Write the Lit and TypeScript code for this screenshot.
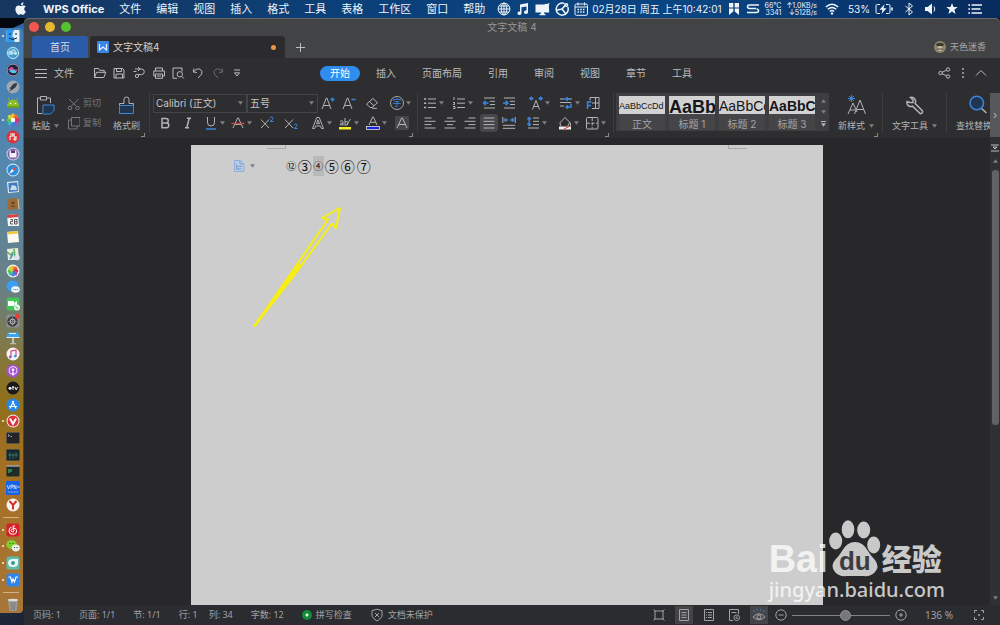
import { LitElement, html, svg, css, nothing } from "lit";
import { customElement, state } from "lit/decorators.js";

const ic = (w: number, h: number, body: unknown, cls = "") =>
  html`<svg class="ic ${cls}" width=${w} height=${h} viewBox="0 0 ${w} ${h}" aria-hidden="true">${body}</svg>`;

const caret = html`<svg class="caret" width="5" height="4" viewBox="0 0 5 4" aria-hidden="true"><path d="M0 .3h5L2.500 3.800z"/></svg>`;

/* ---------- system menu bar ---------- */
const apple = svg`<path class="f" d="M8.700 2.800C9.300 2.100 9.500 1.200 9.400.3c-.9.100-2.600.9-2.500 2.900.7 0 1.300-.1 1.800-.4zM11.800 9.400c-.7 1.800-1.700 3.300-2.900 3.300-.8 0-1.100-.5-2-.5s-1.300.5-2 .5C3.300 12.700 1.400 10 1.400 7.200c0-2.400 1.500-3.800 3.100-3.800 1 0 1.700.6 2.400.6s1.500-.7 2.700-.6c.9 0 1.700.5 2.100 1.200-2.100 1.300-1.800 4 .1 4.800z"/>`;
const globe = svg`<g class="s"><circle cx="7" cy="7" r="5.900"/><ellipse cx="7" cy="7" rx="2.800" ry="5.900"/><path d="M7 1v12M1 7h12M2.200 4h9.600M2.200 10h9.600"/></g>`;
const music = svg`<path class="f" d="M4 2.500L12 1v9.200a2 1.700 0 1 1-1.500-1.600V4.400L5.500 5.300v6a2 1.700 0 1 1-1.500-1.600z"/>`;
const display = svg`<path class="f" d="M.5 2.500h9l1-.8 1.300.3L14.500 1l-.6 2.500.3 7H9l.3 1.500h1.200v1.200h-6V12h1.200L6 10.500H.5z"/>`;
const orbit = svg`<g class="s b"><path d="M12.800 5A6 6 0 1 1 9.500 1.600"/><path d="M1.300 8.300L7 7l3.500-4M7 7l3.500 4.500"/><circle cx="11.300" cy="3" r="1.300"/></g>`;
const calendar = svg`<g class="s"><rect x="1" y="2" width="12.500" height="11.300" rx="1.500"/><path d="M1 5h12.500M4 0.500v3M10.500 0.500v3"/><path stroke-dasharray="1.500 1.200" d="M3.500 7.500h8M3.500 10h8" stroke-width="1.500"/></g>`;
const flag = svg`<path class="f" d="M1 1h4.300v8.500L1 13zM6.700 1H11v12L6.700 9.500z"/><path d="M1 6h10" stroke="#0b3b75" stroke-width="1"/>`;
const strip = svg`<path class="s b" d="M13 3H3.500Q1.500 3 1.500 4.700T3.500 6.500H10M1 10.500h9.500q2 0 2-1.700T10.500 7" stroke-width="2"/>`;
const wifi = svg`<g class="s b"><path d="M.8 5Q7 -.6 13.200 5M2.800 7.300Q7 3.600 11.200 7.300M4.800 9.500Q7 7.500 9.200 9.500"/></g><circle class="f" cx="7" cy="11.500" r="1.200"/>`;
const battery = svg`<g class="s"><path d="M5 2.500H2.300q-1.300 0-1.300 1.300v6.400q0 1.300 1.300 1.300H5M11 2.500h2.700q1.300 0 1.300 1.300v6.400q0 1.300-1.300 1.300H11"/><path d="M17 5.500v3" stroke-width="1.600"/></g><path class="f" d="M9.500 2.200L4.500 7.800h3L6.500 12l5-5.800h-3z"/>`;
const bluetooth = svg`<path class="s" d="M1.500 4L8.500 10 5 13V1l3.500 3-7 6"/>`;
const speaker = svg`<path class="f" d="M1 5h2.500L8 1.500v11L3.500 9H1z"/><path class="s" d="M10 4.500q1.500 2.500 0 5"/>`;
const star = svg`<path class="f" d="M6 1l1.500 3.900 4.200.2-3.300 2.700 1.200 4.100L6 9.600l-3.600 2.300 1.200-4.100L.3 5.100l4.200-.2z"/>`;
const list = svg`<path class="s b" d="M3.500 3H14M3.500 7h9M3.500 11H14" stroke-width="1.700"/><path class="s b" stroke-width="1.700" d="M.3 3H2M.3 7H2M.3 11H2"/>`;

/* ---------- quick bar ---------- */
const burger = svg`<path class="s" d="M0 3.500h12M0 7.500h12M0 11.500h12"/>`;
const open = svg`<path class="s" d="M1.500 11.500V2.500h4l1.200 1.800h4.500v2M1.500 11.500L3.500 6.300h9.300l-2 5.200z"/>`;
const save = svg`<path class="s" d="M2 2.500h8.500L12 4v8H2zM4.500 2.500v3h5v-3M4 12V8h6.500v4"/>`;
const pdf = svg`<path class="s" d="M5.500 3h4a2.800 2.800 0 0 1 0 5.600H6.500V10a1.600 1.600 0 1 1-1.600-1.600h1.600M3 3h2.500M6 1l2 2-2 2M1.500 5.500h3"/>`;
const print = svg`<path class="s" d="M3.500 5V2h7v3M3.500 10H1.800V5h10.700v5h-1.700M3.500 8h7v4.300h-7zM5 10h4"/>`;
const preview = svg`<path class="s" d="M6 12.300H2V2h9v3.500M12.800 12.500l-1.800-2"/><circle class="s" cx="8.800" cy="8.300" r="2.700"/>`;
const undo = svg`<path class="s" d="M3 2.500L2.300 6l3.600.5M2.500 6q3.500-4.500 7-2.500 2.500 2 1 4.800L7 12"/>`;
const redo = svg`<path class="s" d="M11 2.500l.7 3.500-3.600.5M11.500 6Q8 1.500 4.500 3.500 2 5.500 3.500 8.300L7 12"/>`;
const more = svg`<path class="s" d="M4 4h6M4.500 6.800h5L7 10z"/>`;
const share = svg`<g class="s"><circle cx="2.500" cy="7" r="1.700"/><circle cx="10" cy="3.500" r="1.700"/><circle cx="10" cy="10.500" r="1.700"/><path d="M4 6.300l4.400-2M4 7.700l4.400 2"/></g>`;
const dots = svg`<g class="f"><circle cx="7" cy="3" r=".9"/><circle cx="7" cy="7" r=".9"/><circle cx="7" cy="11" r=".9"/></g>`;
const up = svg`<path class="s" d="M2 9.500l5-5 5 5"/>`;

/* ---------- ribbon ---------- */
const paste = svg`<path class="s" d="M7 18.500H2.500V3H5M12 3h3.500v5M5.500 1.500h6V5h-6z"/><path class="a fill" d="M8 10h11v5.500l-3.500 3.500H8z"/>`;
const brush = svg`<path class="s" d="M2.500 10.500V8.500H7V4.500Q7 2 9.500 2T12 4.500v4h4.500v2"/><path class="a fill" d="M2.500 10.500h14v8h-14zM2.500 13.500"/>`;
const cut = svg`<g class="s"><path d="M2 2l7.500 7.500M11.500 2L4 9.500"/><circle cx="3" cy="11" r="1.800"/><circle cx="10.500" cy="11" r="1.800"/></g>`;
const copy = svg`<path class="s" d="M4.500 1.500H13v8.500H4.500zM4.500 4H1.500v9H10v-3"/>`;
const grow = (d: string) => svg`<path class="s" d="M1 13L5.300 2h.6L10 13M2.700 9.500h5.800"/><path class="a b" d=${d}/>`;
const eraser = svg`<path class="s" d="M5 11.500L1.500 8 8 2.500l4.500 4.200-5.500 4.800zM4.500 5.500L9 9.800M7 12.300h5"/>`;
const bold = svg`<path class="s b" stroke-width="1.900" d="M4 2.500h4a2.200 2.200 0 0 1 0 4.500H4zM4 7h4.500a2.300 2.300 0 0 1 0 4.700H4z"/>`;
const ital = svg`<path class="s b" d="M6 2.300h4M4 11.700h4M8.200 2.300L5.800 11.700"/>`;
const under = svg`<path class="s" d="M3.500 1v5.500a3.500 3.500 0 0 0 7 0V1"/><path class="a b" d="M2 13h10"/>`;
const bigA = svg`<path class="s" d="M2 12L6.600 2h.8L12 12M4 8.500h6"/>`;
const strike = svg`${bigA}<path stroke="#b84a4a" stroke-width="1.400" d="M.5 7.500h13"/>`;
const cross = svg`<path class="s" d="M1 3.500l8 8.500M9 3.500L1 12"/>`;
const supTwo = svg`${cross}<path class="a" d="M10 2.300q.3-1.300 1.600-1.300t1.500 1.200T10 5.500h3.500"/>`;
const subTwo = svg`${cross}<path class="a" d="M10 9.300q.3-1.300 1.600-1.300t1.500 1.200T10 12.500h3.500"/>`;
const outline = svg`<path class="s" d="M1.500 12.500L5.800 1.500h2.400l4.300 11h-2L9.400 10H4.600l-1 2.500zM5.500 7.700h3L7 4z"/>`;
const marker = svg`<rect x="1" y="11" width="12" height="2.500" fill="#f5ee22"/><path class="s" d="M2 5.500q3-2 3 1v3M5 7q-3 0-3 1.300T5 8.500M7 2v7.500M7 6q3-1.500 3 1.200T7 9M12.500 3L9 8"/>`;
const fontColor = svg`<rect x=".5" y="10.500" width="13" height="3" fill="#1b24dd" stroke="#ddd" stroke-width=".8"/><path class="s" d="M3 9L6.600 1h.8L11 9M4.500 6.300h5"/>`;
const bullets = svg`<path class="s" d="M5 3h8M5 7.200h8M5 11.500h8"/><path class="s b" stroke-width="2" d="M1 3h2.200M1 7.200h2.200M1 11.500h2.200"/>`;
const numbers = svg`<path class="s" d="M5 3h8M5 7.200h8M5 11.500h8M2 1v3M1 6.500h1.500v2H1M1 10.500h2v2H1"/>`;
const outdent = svg`<path class="s" d="M2 2h11M8 5.300h5M8 8.500h5M2 12h11"/><path class="a b" d="M1.500 7h5M3.800 4.700L1.500 7l2.300 2.300"/>`;
const indent = svg`<path class="s" d="M2 2h11M8 5.300h5M8 8.500h5M2 12h11"/><path class="a b" d="M1 7h5M3.700 4.700L6 7 3.700 9.300"/>`;
const scaleA = svg`<path class="s" d="M3.500 13.500L7 4.500l3.500 9M4.800 10.500h4.400"/><path class="a b" d="M1 2.500h3.500M3 .8L1 2.500l2 1.700M13 2.500H9.500M11 .8l2 1.700-2 1.700"/>`;
const breaks = svg`<path class="s" d="M1 3h4M9 3h4M1 6.500h11M1 10h4"/><path class="a b" d="M5 3h4M7.500 1.300L9.300 3 7.500 4.700M12 7.500V11H7M9 9.300L7 11l2 1.700"/>`;
const panel = svg`<path class="s" d="M4 4.500V1.500h9v11H6M9.500 1.500v11M6 7h7"/><path class="a b" d="M1.500 13V6h4M1.500 9.500h3.500"/>`;
const lines = (a: string) => svg`<path class="s" d=${a}/>`;
const alignL = lines("M1.500 2h7M1.500 5.300h11M1.500 8.600h7M1.500 12h11");
const alignC = lines("M4 2h6M1.500 5.300h11M4 8.600h6M1.500 12h11");
const alignR = lines("M5.500 2h7M1.500 5.300h11M5.500 8.600h7M1.500 12h11");
const alignJ = lines("M1.500 2h11M1.500 5.300h11M1.500 8.600h11M1.500 12h11");
const spread = svg`<path class="s" d="M.8 1v6M13.200 1v6M.8 9.300h12.400M.8 12.300h12.400"/><path class="a b" d="M2.500 4h3.500M4 2.300L2.500 4 4 5.700M8 4h3.500M10 2.300L11.500 4 10 5.700"/>`;
const leading = svg`<path class="s" d="M7 2h6M7 5.300h6M7 8.600h6M2 12h11"/><path class="a b" d="M3.200 1.500v8M1.300 3.300L3.200 1.500 5 3.300M1.300 7.700l1.900 1.800L5 7.700"/>`;
const bucket = svg`<rect x="1" y="10.500" width="12" height="3" fill="#eee"/><path d="M6 13l5-2.500" stroke="#d33"/><path class="s" d="M3 10L1.800 7l5-5.500 5 4.700-2 3.800M11.500 6q1.500 2 1 4"/>`;
const borders = svg`<rect class="s" x="1.500" y="1.500" width="11.500" height="11.500" rx="1"/><path class="s" d="M7.200 2v10.500M2 7.200h10.500" stroke-dasharray="3 1.500"/>`;
const newStyle = svg`<path class="s" d="M3 19l5-11 4 9M5 15h5M9.500 19L15 5l5.500 14M11.800 14.500h6.500"/><path class="a" d="M6.500 0v7M3 3.500h7M4 1l5 5M9 1L4 6"/>`;
const wrench = svg`<path class="s b" stroke-width="1.200" d="M3 6.500a4 4 0 0 0 5.500 4.700l7 6.800a1.800 1.800 0 0 0 2.600-2.500l-6.900-7A4.200 4.200 0 0 0 6.500 2.500L9 5v2.500H6z"/>`;
const lens = svg`<path class="s b" stroke-width="2" d="M13 13l5.500 5"/><circle class="a b fill" cx="8.800" cy="8" r="6.800"/>`;

/* ---------- status bar ---------- */
const shield = svg`<path class="s" d="M7 1.200l5 1.500v5.500q-1.500 3-5 4.800-3.500-1.800-5-4.800V2.700zM5 5l4 4M9 5L5 9"/>`;
const frame = svg`<path class="s" d="M3 3h8v8H3zM1.500 1.500l2 2M12.500 1.500l-2 2M1.500 12.500l2-2M12.500 12.500l-2-2"/>`;
const pageLines = svg`<path class="s" d="M2.500 1.500h9v11h-9zM4.500 4.500h5M4.500 7h5M4.500 9.500h5"/>`;
const outlineView = svg`<path class="s" d="M2.500 1.500h9v11h-9zM6 4.500h4M6 7h4M6 9.500h4M4 4.500h1M4 7h1M4 9.500h1"/>`;
const webView = svg`<path class="s" d="M6 12.500H2.500v-11h9V6M4.500 4.500h5"/><circle class="s" cx="9.700" cy="9.700" r="2.800"/><circle class="s" cx="9.700" cy="9.700" r=".8"/>`;
const eye = svg`<path class="s" d="M1 9q6-6.500 12 0-6 5.500-12 0z"/><circle class="s" cx="7" cy="9" r="2"/><path class="a" d="M2.500 4L1.500 2.500M5.500 2.500L5 .8M8.500 2.500L9 .8M11.500 4l1-1.500"/>`;
const minus = svg`<circle class="s" cx="7" cy="7" r="5.200"/><path class="s" d="M4.500 7h5"/>`;
const plus = svg`<circle class="s" cx="7" cy="7" r="5.200"/><path class="s" d="M5 7h4M7 5v4"/>`;
const full = svg`<path class="s" d="M2.500 5V2.500H5M9 2.500h2.500V5M11.500 9v2.500H9M5 11.500H2.500V9"/><circle class="f" cx="7" cy="7" r="1"/>`;

/* ---------- dock artwork, each on a 14 x 14 grid ---------- */
const disc = (c: string, inner: unknown = nothing) => svg`<circle cx="7" cy="7" r="6.500" fill=${c}/>${inner}`;
const tile = (c: string, inner: unknown = nothing) => svg`<rect x=".5" y=".5" width="13" height="13" rx="2.500" fill=${c}/>${inner}`;
const petals = ["#f5b52a", "#f06a2e", "#e0304e", "#a44bc0", "#3c7de0", "#35b8c0", "#5cc04a", "#c8d838"];
const flower = (r: number) => petals.map((c, i) => svg`<ellipse cx="7" cy=${7 - r} rx="2" ry="2.700" fill=${c} transform="rotate(${i * 45} 7 7)"/>`);
interface App { name: string; art: unknown; running?: boolean }
const apps: (App | null)[] = [
  { name: "访达", running: true, art: svg`<rect x=".5" y="1" width="13" height="12" rx="1" fill="#e4eef6"/><path d="M.5 1H8Q6 5 6.500 8H8l.5 5h-8z" fill="#2b9af0"/><path d="M4 4v2M10 4v2M3 9q4 3 8 0" stroke="#123" fill="none"/>` },
  { name: "下载", art: disc("#3c9cc8", svg`<circle cx="7" cy="7" r="5.500" fill="none" stroke="#c9e9f5"/><path d="M3 9V6l2-1v4M6 9V4h3v5M10 9V6M3 7h8" stroke="#d9f0f8" fill="none"/>`) },
  { name: "Siri", art: disc("#23233f", svg`<circle cx="7" cy="7" r="6" fill="none" stroke="#a9a9bd"/><path d="M2 7q3-5 5-2t5 1q-2 5-5 3T2 7z" fill="#cf4f9b"/><path d="M3 8q4-3 8 1-4 3-8-1z" fill="#50c8e8"/>`) },
  { name: "启动台", art: disc("#9fa8b2", svg`<path d="M11 3q-4 0-6 4L3.500 8 6 10.500 7 9q4-2 4-6zM4 9.500L3 11.500 5 10.500z" fill="#333b45"/>`) },
  { name: "Android", art: svg`<path d="M1 10a6 6.500 0 0 1 12 0z" fill="#8cbf26"/><path d="M3.500 4.500L2.500 2M10.500 4.500l1-2.500" stroke="#8cbf26"/><circle cx="4.500" cy="7.500" r=".8" fill="#fff"/><circle cx="9.500" cy="7.500" r=".8" fill="#fff"/><rect x="1" y="10" width="12" height="2" fill="#6f9f20"/>` },
  { name: "浏览器", running: true, art: svg`<circle cx="7" cy="7" r="5" fill="#e8a040"/>${flower(4)}<circle cx="7" cy="7" r="2.200" fill="#fff"/>` },
  { name: "讲稿", art: disc("#d8343a", svg`<path d="M4 4h3v2H4v4M8 3v4h3M7 9h4M9 7v4" stroke="#fff" fill="none"/>`) },
  { name: "磁盘", art: disc("#d9d3e6", svg`<circle cx="7" cy="7" r="5.500" fill="#7d62ae"/><rect x="3.500" y="3.500" width="7" height="7" rx="1" fill="#f2f0f5"/><rect x="5" y="3.500" width="4" height="2.500" fill="#4a3a70"/>`) },
  { name: "Safari", art: disc("#e6edf3", svg`<circle cx="7" cy="7" r="5.600" fill="#2a8fe0"/><path d="M11 3L8 8 6 6z" fill="#f04a3a"/><path d="M3 11l3-5 2 2z" fill="#fff"/>`) },
  { name: "邮件", art: svg`<path d="M1 2l11-1 1 11L2 13z" fill="#e8eef5"/><path d="M2.300 3l9-.8.8 9L3 12z" fill="#3f7fc2"/><path d="M4 10l2-5 4 1 1 4z" fill="#c8dcec"/>` },
  { name: "通讯录", art: svg`<path d="M1 2l11-1 1 11L2 13z" fill="#9c6b3a"/><path d="M12 2l1 10" stroke="#d9c9a0"/><circle cx="7" cy="6" r="1.500" fill="#6b451f"/><path d="M4.500 10q2.500-3 5 0z" fill="#6b451f"/>` },
  { name: "日历", art: svg`<path d="M1 2l11-1 1 12H2z" fill="#f4f4f4"/><path d="M1 2l11-1 .3 3L1.200 5z" fill="#e04040"/><path d="M4.500 6.500h2v2h-2v2.500h2.500M8.500 6.500h2.500V11H8.500zM8.500 8.700H11" fill="none" stroke="#333" stroke-width=".8"/>` },
  { name: "备忘录", art: svg`<path d="M1 2l11-1 1 11L2 13z" fill="#fafaf2"/><path d="M1 2l11-1 .2 2.500L1.200 4.500z" fill="#f3c93c"/>` },
  { name: "地图", art: svg`<path d="M1 2l11-1 1 12H2z" fill="#e9ecd8"/><path d="M1 5l4 3 2-3M8 2l1 8" stroke="#55a860" stroke-width="1.500" fill="none"/><path d="M4 12l3-5" stroke="#4a90d8" stroke-width="1.500"/><circle cx="11" cy="10.500" r="2.700" fill="#dde3ea"/>` },
  { name: "照片", art: svg`<circle cx="7" cy="7" r="6.500" fill="#f7f7f7"/>${flower(2.800)}` },
  { name: "信息", art: svg`<ellipse cx="6.500" cy="6" rx="6" ry="5.500" fill="#3c9df5"/><ellipse cx="9.500" cy="9.500" rx="4.300" ry="3.300" fill="#eef3f8"/><path d="M7.500 9.500h4.500" stroke="#4a80c0" stroke-dasharray="1 .7"/>` },
  { name: "FaceTime", art: tile("#3fc655", svg`<path d="M2 4h6v5H2zM8 6l3-2v5L8 7.500z" fill="#fff"/><circle cx="11" cy="10.500" r="3" fill="#e9f5ea"/><path d="M9.800 9.500q.5 2 2.300 2" stroke="#3fc655" fill="none"/>`) },
  { name: "设置", art: tile("#8b8f94", svg`<circle cx="6.500" cy="7.500" r="4.600" fill="#444" stroke="#222"/><circle cx="6.500" cy="7.500" r="2.500" fill="none" stroke="#ccc"/><path d="M6.500 3v9M2 7.500h9" stroke="#999" stroke-width=".7"/><circle cx="11.500" cy="2.500" r="2.500" fill="#ee3b35"/>`) },
  { name: "Keynote", art: svg`<path d="M2 1.500h10l1.500 4.500H.5z" fill="#3ca4ec"/><path d="M3 2.500h7M.5 6.500h13" stroke="#e8eef2"/><path d="M7 6.500V12" stroke="#ddd" stroke-width="1.500"/><path d="M4 12.700h6" stroke="#ccc"/>` },
  { name: "音乐", art: disc("#f8f6f8", svg`<path d="M5 10V4l5-1v6" stroke="#e0508a" fill="none" stroke-width="1.300"/><circle cx="4.200" cy="10" r="1.400" fill="#9a5ad8"/><circle cx="9.200" cy="9.200" r="1.400" fill="#4aa0e8"/>`) },
  { name: "播客", art: disc("#a44fd0", svg`<circle cx="7" cy="6.500" r="4" fill="none" stroke="#f3e4fa"/><circle cx="7" cy="6" r="1.400" fill="#fff"/><path d="M7 8v3.500" stroke="#fff" stroke-width="1.600"/>`) },
  { name: "视频", art: disc("#19191b", svg`<circle cx="4" cy="7.200" r="1.500" fill="#eee"/><path d="M7 5v4M6 6.200h2.300M9 6l1.200 3L11.500 6" stroke="#eee" fill="none"/>`) },
  { name: "App Store", art: disc("#2587f0", svg`<path d="M7.700 3L4 10.500M6.300 3L10 10.500M3 8.500h8" stroke="#fff" stroke-width="1.200"/>`) },
  { name: "Vivaldi", running: true, art: disc("#f4f0f0", svg`<circle cx="7" cy="7" r="5.500" fill="#e0303a"/><path d="M4 4.500l3 5.500 3-5.500" stroke="#fff" stroke-width="2" fill="none"/>`) },
  { name: "终端", art: svg`<rect x=".5" y="1.500" width="13" height="11" rx="1" fill="#222428" stroke="#55585c" stroke-width=".6"/><path d="M2 3.500l1.500 1L2 5.500M4.500 5.500H6" stroke="#ddd" fill="none" stroke-width=".7"/>` },
  { name: "监视器", art: svg`<rect x=".5" y="1.500" width="13" height="11" rx="1" fill="#16262c" stroke="#3b4a50" stroke-width=".6"/><path d="M2 7h10M4 4v7M7 5v6M10 4v6" stroke="#3f8a80" stroke-width=".7"/>` },
  { name: "控制台", art: svg`<rect x=".5" y="1.500" width="13" height="11" rx="1" fill="#1d2c28"/><path d="M.5 2h13" stroke="#dde"/><path d="M2 6h2M2 8h2M5 5v3" stroke="#42d060"/>` },
  { name: "VPN", art: svg`<rect width="14" height="14" rx="1" fill="#1763e8"/><path d="M1 4l1.500 4L4 4M5 8V4h2v2H5M8 8V4l2 4V4M11 6h3" stroke="#d5e4ff" fill="none" stroke-width=".8"/><path d="M2 11h10" stroke="#9fc0f8" stroke-dasharray="1 .5"/>` },
  { name: "Yandex", art: disc("#f5f2ef", svg`<path d="M3.500 3L7 7l3.500-4M7 7v4.500" stroke="#d8302c" stroke-width="2" fill="none"/>`) },
  null,
  { name: "网易云音乐", running: true, art: tile("#d81e28", svg`<path d="M9 3Q7 2 7 4l1 4a1.500 1.500 0 1 1-1.500-2Q10 4 10.500 7.500T7 11.300 3 8t2.500-3.800" stroke="#fff" fill="none"/>`) },
  { name: "微信", running: true, art: svg`<ellipse cx="5.500" cy="5.500" rx="5.200" ry="4.500" fill="#7ed02a"/><ellipse cx="9.800" cy="9" rx="4" ry="3.400" fill="#ecefe8"/><path d="M3.500 4.500h1M6.500 4.500h1M8 8.500h1M10.500 8.500h1" stroke="#35511c"/>` },
  { name: "图片查看", running: true, art: tile("#5dbdab", svg`<path d="M2 7q0-4 5-4h5v4q0 4-5 4T2 7z" fill="#eaf6f3"/><circle cx="7" cy="7" r="2" fill="#3a9c8a"/>`) },
  { name: "WPS", running: true, art: tile("#2f85ee", svg`<path d="M2.500 4h2l1.500 5 1-3 1.500 3L10 4h2" stroke="#fff" stroke-width="1.200" fill="none"/>`) },
  null,
  { name: "废纸篓", art: svg`<path d="M2 1.500h10L10.500 13h-7z" fill="#9c9c9a"/><ellipse cx="7" cy="2" rx="5" ry="1.300" fill="#dcdcda"/><path d="M5 4l.5 8M9 4l-.5 8M7 4v8" stroke="#666" stroke-width=".6"/>` },
];

const menus = ["文件", "编辑", "视图", "插入", "格式", "工具", "表格", "工作区", "窗口", "帮助"];
const tabs = ["开始", "插入", "页面布局", "引用", "审阅", "视图", "章节", "工具"];
const styleCards = [
  { name: "正文", sample: "AaBbCcDd", cls: "small" },
  { name: "标题 1", sample: "AaBb(", cls: "huge" },
  { name: "标题 2", sample: "AaBbCc", cls: "" },
  { name: "标题 3", sample: "AaBbCc", cls: "heavy" },
];

const shared = css`
  * { box-sizing: border-box; }
  button, select { font: inherit; color: inherit; background: none; border: 0; margin: 0; padding: 0; }
  button { display: flex; align-items: center; justify-content: center; white-space: nowrap; }
  a { color: inherit; text-decoration: none; }
  svg { display: block; flex: none; }
  .f { fill: currentColor; }
  .s { fill: none; stroke: currentColor; stroke-width: 1; }
  .a { fill: none; stroke: #3a86dd; stroke-width: 1; }
  .b { stroke-width: 1.5; }
  .fill { fill: #20354f; }
  .caret { fill: #7f7f82; }
`;

@customElement("system-bar")
class SystemBar extends LitElement {
  static styles = [shared, css`
    :host { display: flex; align-items: center; justify-content: space-between; height: 18px; padding: 0 18px 0 14px;
      color: #eef4fa; background: linear-gradient(90deg, #16365f, #0b4079 35%, #0a4482 70%, #082a5c);
      font-size: 11px; line-height: 16px; white-space: nowrap; overflow: hidden; }
    nav { display: flex; gap: 15px; align-items: center; }
    .brand { font-weight: 700; }
    .tray { display: flex; align-items: center; gap: 5px; }
    .clock { display: flex; align-items: center; gap: 3px; font-size: 10px; }
    .wide { display: flex; align-items: center; gap: 6px; }
    .stats { display: flex; gap: 5px; padding-right: 3px; font-size: 7px; line-height: 7px; text-align: right; }
    .charge { display: flex; align-items: center; gap: 5px; padding-left: 3px; font-size: 10px; }
    .ends { display: flex; align-items: center; gap: 10px; padding-left: 6px; }
  `];
  render() {
    return html`
      <nav>${ic(14, 14, apple)}<a class="brand" href="#">WPS Office</a>${menus.map((m) => html`<a href="#">${m}</a>`)}</nav>
      <div class="tray">
        ${ic(14, 14, globe)}${ic(14, 14, music)}${ic(15, 14, display)}${ic(14, 14, orbit)}
        <div class="wide">
          <span class="clock">${ic(15, 14, calendar)}02月28日 周五 上午10:42:01</span>
          ${ic(12, 14, flag)}${ic(14, 14, strip)}
        </div>
        <div class="stats"><span>66°C<br>3341</span><span>↑1.0KB/s<br>↓512B/s</span></div>
        <div class="wide">${ic(14, 14, wifi)}<span class="charge">53%${ic(18, 14, battery)}</span></div>
        <div class="ends">${ic(10, 14, bluetooth)}${ic(12, 14, speaker)}${ic(12, 14, star)}${ic(14, 14, list)}</div>
      </div>`;
  }
}

@customElement("app-dock")
class AppDock extends LitElement {
  static styles = [shared, css`
    :host { display: flex; padding: 10px 1px 12px 0; background: linear-gradient(155deg, #04070e 14px, #2b64a8 15px, #29548a 60%, #1c2434); }
    ul { flex: 1; display: flex; flex-direction: column; margin: 0; padding: 0; list-style: none; border-radius: 0 4px 4px 0;
      background: linear-gradient(#3f7db8, #5688ad 25%, #697f80 45%, #84783f 56%, #8d701c 63%, #a56f22 75%, #a87638); }
    li { flex: 1; display: flex; align-items: center; gap: 2px; padding-left: 2px; min-height: 0; }
    li::before { content: ""; width: 2px; height: 2px; border-radius: 50%; }
    li.on::before { background: #f5f1df; }
    li.rule { flex: 0 0 8px; }
    li.rule::before { width: 16px; height: 1px; margin-left: 1px; background: #d2b483; border-radius: 0; }
  `];
  render() {
    return html`<ul>${apps.map((a) => a
      ? html`<li class=${a.running ? "on" : ""} title=${a.name}>${ic(14, 14, a.art)}</li>`
      : html`<li class="rule"></li>`)}</ul>`;
  }
}

@customElement("ribbon-bar")
class RibbonBar extends LitElement {
  static styles = [shared, css`
    :host { display: flex; height: 50px; padding-top: 5px; color: #b4b4b6; background: #2e2e30; overflow: hidden; font-size: 9px; line-height: 12px; }
    .group { position: relative; display: flex; border-right: 1px solid #3d3d40; height: 40px; flex: none; }
    .corner { position: absolute; right: 4px; bottom: -4px; width: 4px; height: 4px; border: solid #88888a; border-width: 0 1px 1px 0; }
    .clip { padding: 0 8px; gap: 8px; width: 126px; }
    .big { flex-direction: column; gap: 4px; padding-top: 2px; flex: none; justify-content: flex-start; }
    .big span { display: flex; align-items: center; gap: 4px; }
    .pair { display: grid; grid-template: 20px 20px / 38px; }
    .pair button { gap: 3px; color: #77777a; justify-content: flex-start; }
    .font { padding-left: 3px; width: 268px; flex-direction: column; }
    .row { display: grid; height: 20px; align-items: center; }
    .row button { justify-content: flex-start; gap: 2px; }
    .font .r1 { grid-template-columns: 94px 71px 3px 21px 23px 25px 24px; }
    .font .r2 { grid-template-columns: 23px 23px 27px 29px 24px 27px 27px 28px 29px 14px; padding-left: 5px; }
    .pick { display: flex; align-items: center; height: 19px; border: 1px solid #454548; padding-right: 3px; color: #c6c6c8; }
    .pick select { appearance: none; flex: 1; min-width: 0; font-size: 10px; padding-left: 2px; outline: 0; }
    .round { width: 14px; height: 14px; border: 1px solid #aaa; border-radius: 50%; color: #3a86dd; font-size: 9px; line-height: 12px; text-align: center; }
    .chip .ic { background: #47474a; border-radius: 2px; }
    .para { padding-left: 5px; width: 196px; flex-direction: column; }
    .para .r1 { grid-template-columns: 29px 30px 20px 27px 30px 27px 20px; }
    .para .r2 { grid-template-columns: 20px 20px 19px 20px 24px 32px 27px 24px; }
    .on .ic { background: #47474a; outline: 2px solid #47474a; border-radius: 1px; }
    .styles { border: 0; padding-left: 2px; }
    .shelf { display: flex; gap: 4px; padding: 3px 3px 1px; height: 38px; background: #3e3e40; }
    .card { flex-direction: column; justify-content: space-between; width: 46px; color: #a4a4a6; font-size: 10px; background: #454547; }
    .sample { width: 46px; height: 18px; overflow: hidden; background: #d2d2d2; color: #15151a; text-align: left; font: 14px/20px "Liberation Sans", Arial, sans-serif; }
    .sample.small { font-size: 9px; }
    .sample.huge { font-size: 18px; font-weight: 700; line-height: 22px; }
    .sample.heavy { font-weight: 700; }
    .arrows { display: flex; flex-direction: column; justify-content: space-around; padding-left: 2px; }
    .arrows .top { transform: rotate(180deg); }
    .tool { padding: 0 9px; }
    .new { padding-right: 8px; padding-left: 9px; }
    .next { margin-left: auto; width: 10px; height: 44px; background: #58585b; font-size: 11px; flex: none; }
    .find { border: 0; flex: 1 1 0; min-width: 0; overflow: hidden; padding-left: 9px; }
  `];
  render() {
    const b = (label: string, art: unknown, arrow = false, cls = "") =>
      html`<button class=${cls} title=${label} aria-label=${label}>${ic(14, 14, art)}${arrow ? caret : nothing}</button>`;
    return html`
      <div class="group clip">
        <button class="big">${ic(21, 21, paste)}<span>粘贴${caret}</span></button>
        <div class="pair"><button>${ic(13, 13, cut)}剪切</button><button>${ic(13, 14, copy)}复制</button></div>
        <button class="big">${ic(19, 21, brush)}<span>格式刷</span></button>
        <i class="corner"></i>
      </div>
      <div class="group font">
        <div class="row r1">
          <label class="pick"><select aria-label="字体"><option>Calibri (正文)</option></select>${caret}</label>
          <label class="pick"><select aria-label="字号"><option>五号</option></select>${caret}</label>
          <span></span>
          ${b("增大字号", grow("M9.500 3.500h4M11.500 1.500v4"))}${b("减小字号", grow("M9.500 3.500h4"))}${b("清除格式", eraser)}
          <button title="拼音指南"><span class="round">字</span>${caret}</button>
        </div>
        <div class="row r2">
          ${b("加粗", bold)}${b("倾斜", ital)}${b("下划线", under, true)}${b("删除线", strike, true)}${b("上标", supTwo)}${b("下标", subTwo)}
          ${b("文字效果", outline, true)}${b("突出显示", marker, true)}${b("字体颜色", fontColor, true)}${b("字符底纹", bigA, false, "chip")}
        </div>
        <i class="corner"></i>
      </div>
      <div class="group para">
        <div class="row r1">
          ${b("项目符号", bullets, true)}${b("编号", numbers, true)}${b("减少缩进", outdent)}${b("增加缩进", indent)}
          ${b("中文版式", scaleA, true)}${b("换行", breaks, true)}${b("制表位", panel)}
        </div>
        <div class="row r2">
          ${b("左对齐", alignL)}${b("居中", alignC)}${b("右对齐", alignR)}${b("两端对齐", alignJ, false, "on")}${b("分散对齐", spread)}
          ${b("行距", leading, true)}${b("底纹", bucket, true)}${b("边框", borders, true)}
        </div>
        <i class="corner"></i>
      </div>
      <div class="group styles">
        <div class="shelf">
          ${styleCards.map((s) => html`<button class="card"><span class="sample ${s.cls}">${s.sample}</span><span>${s.name}</span></button>`)}
          <div class="arrows"><span class="top">${caret}</span>${caret}${ic(5, 6, svg`<path class="f" d="M0 0h5v1H0zM0 2.300h5L2.500 5.800z"/>`)}</div>
        </div>
      </div>
      <div class="group new">
        <button class="big">${ic(22, 21, newStyle)}<span>新样式${caret}</span></button>
        <i class="corner"></i>
      </div>
      <div class="group tool"><button class="big">${ic(21, 21, wrench)}<span>文字工具${caret}</span></button></div>
      <div class="group find"><button class="big">${ic(21, 21, lens)}<span>查找替换${caret}</span></button></div>
      <button class="next" aria-label="更多">›</button>`;
  }
}

@customElement("status-bar")
class StatusBar extends LitElement {
  static styles = [shared, css`
    :host { display: flex; align-items: center; justify-content: space-between; height: 20px; padding: 0 14px 0 9px;
      color: #a2a2a4; background: #2b2c30; font-family: "Noto Sans", "Noto Sans CJK SC", sans-serif; font-size: 9px; line-height: 12px; white-space: nowrap; }
    .facts { display: flex; align-items: center; gap: 18px; }
    .near { display: flex; gap: 11px; }
    .note { display: flex; align-items: center; gap: 4px; }
    .lamp { width: 10px; height: 10px; border-radius: 50%; background: radial-gradient(#d8f5dc 1px, #128a3a 2px); }
    .tools { display: flex; align-items: center; gap: 11px; }
    .zoom { display: flex; align-items: center; gap: 4px; }
    .view { display: flex; align-items: center; gap: 8px; }
    .pct { font-size: 10px; padding: 0 8px 0 6px; }
    .on { background: #454548; outline: 2px solid #454548; }
    input { appearance: none; width: 98px; height: 12px; margin: 0; background: linear-gradient(#828284, #828284) center / 100% 1px no-repeat; }
    input::-webkit-slider-thumb { appearance: none; width: 11px; height: 11px; border-radius: 50%; background: #77777a; border: 1px solid #909092; }
  `];
  render() {
    const b = (label: string, art: unknown, cls = "") => html`<button class=${cls} title=${label} aria-label=${label}>${ic(14, 14, art)}</button>`;
    return html`
      <div class="facts">
        <span>页码: 1</span><span>页面: 1/1</span><span>节: 1/1</span>
        <span class="near"><span>行: 1</span><span>列: 34</span></span><span>字数: 12</span>
        <span class="note"><i class="lamp"></i>拼写检查</span><span class="note">${ic(14, 14, shield)}文档未保护</span>
      </div>
      <div class="tools">
        ${b("适应窗口", frame)}${b("页面视图", pageLines, "on")}${b("大纲视图", outlineView)}${b("网页视图", webView)}
        <div class="view">${b("护眼模式", eye, "on")}
          <div class="zoom">${b("缩小", minus)}<input type="range" aria-label="缩放" min="0" max="100" value="55">${b("放大", plus)}</div>
        </div>
        <span class="pct">136 %</span>${b("全屏", full)}
      </div>`;
  }
}

@customElement("app-root")
class AppRoot extends LitElement {
  @state() private active = "开始";
  static styles = [shared, css`
    :host { display: grid; grid-template-rows: auto 1fr; height: 100vh; overflow: hidden; background: #14161c;
      font-family: Inter, "Noto Sans CJK SC", sans-serif; }
    .desk { display: grid; grid-template-columns: 24px 1fr; min-height: 0; }
    .window { display: grid; grid-template-rows: 18px 22px 30px auto 1fr auto; min-width: 0; min-height: 0; background: #424345;
      border-radius: 5px 5px 0 0; overflow: hidden; position: relative; box-shadow: inset 0 1px #66686b; color: #bcbcbe; font-size: 10px; line-height: 14px; }
    .title { display: grid; grid-template-columns: 1fr auto 1fr; align-items: center; padding: 0 5px; color: #98989a; }
    .lights { display: flex; gap: 6px; }
    .lights i { width: 10px; height: 10px; border-radius: 50%; }
    .red { background: #f2564e; } .amber { background: #e5b92f; } .green { background: #54c22f; }
    .tabs { display: flex; gap: 2px; padding: 0 14px 0 8px; }
    .home { width: 56px; background: #2a5ba6; border-radius: 3px 3px 0 0; color: #d3dcea; }
    .doc { width: 195px; background: #2b2b2d; border-radius: 3px 3px 0 0; padding: 0 9px 0 7px; gap: 4px; justify-content: flex-start; color: #d0d0d2; }
    .dirty { width: 5px; height: 5px; border-radius: 50%; background: #ee9644; margin-left: auto; }
    .add { width: 26px; }
    .user { margin-left: auto; display: flex; align-items: center; gap: 4px; font-size: 9px; color: #a6a6a8; }
    .quick { display: flex; align-items: center; background: #2e2e30; padding: 0 12px 0 11px; }
    .file { gap: 7px; width: 55px; justify-content: flex-start; }
    .icons { display: grid; grid-template-columns: repeat(8, 1fr); width: 157px; margin-right: 73px; }
    .dim { opacity: .45; }
    .pages { display: flex; gap: 6px; }
    .pages button { padding: 0 10px; height: 15px; border-radius: 8px; line-height: 15px; }
    .pages .sel { background: #2f8df0; color: #fff; }
    .right { display: flex; gap: 4px; margin-left: auto; }
    .work { display: grid; grid-template-columns: 1fr 10px; min-height: 0; background: #28282b; }
    .stage { padding-top: 7px; display: flex; justify-content: center; }
    .sheet { width: 65.5%; background: #cdcdcd; position: relative; }
    .marks { display: flex; justify-content: space-between; padding: 0 76px; }
    .marks i { width: 19px; height: 4px; border: solid #a9a9a9; border-width: 0 1px 1px 0; }
    .marks i:last-child { border-width: 0 0 1px 1px; }
    .line { display: flex; align-items: center; gap: 4px; height: 20px; margin: 7px 0 0 41px; color: #0c0c0e; }
    .anchor { gap: 4px; margin-right: 27px; }
    .tiny { font-size: 10px; line-height: 20px; width: 11px; text-align: center; }
    .pickd { background: #b9b9b9; }
    .ring { font-size: 14px; line-height: 20px; width: 16px; text-align: center; }
    .runs { display: flex; font-family: "Noto Sans CJK SC", sans-serif; }
    .pointer { position: absolute; left: 59px; top: 59px; }
    .scroll { display: flex; flex-direction: column; align-items: center; gap: 7px; padding: 6px 0 5px; background: #303034; }
    .thumb { width: 7px; height: 56%; border-radius: 3px; background: #626266; }
    .flip { transform: rotate(180deg); }
    .scroll .caret:last-child { margin-top: auto; }
    .mark { position: absolute; right: 55px; bottom: 23px; color: rgba(255, 255, 255, .75); text-align: center; }
    .logo { display: flex; align-items: flex-end; height: 58px; font: 700 38px/38px "Liberation Sans", Arial, sans-serif; }
    .logo .han { font: 900 30px/42px "Noto Sans CJK SC", sans-serif; }
    .paw { position: relative; }
    .du { position: absolute; inset: auto 0 0; text-align: center; font-size: 26px; line-height: 34px; color: #3c3c3e; }
    .site { font: 500 20px/24px "Noto Sans", "Open Sans", sans-serif; }
  `];
  render() {
    const q = (label: string, art: unknown, cls = "") => html`<button class=${cls} title=${label} aria-label=${label}>${ic(14, 14, art)}</button>`;
    return html`
      <system-bar></system-bar>
      <div class="desk">
        <app-dock></app-dock>
        <main class="window">
          <header class="title"><span class="lights"><i class="red"></i><i class="amber"></i><i class="green"></i></span><span>文字文稿 4</span></header>
          <div class="tabs">
            <button class="home">首页</button>
            <button class="doc">${ic(12, 12, svg`<rect width="12" height="12" rx="1" fill="#3a86e8"/><path d="M2.500 3v6L6 6l3.500 3V3" fill="none" stroke="#e8f1fc" stroke-width="1.200"/>`)}文字文稿4<i class="dirty"></i></button>
            <button class="add" aria-label="新建">${ic(9, 9, svg`<path class="s" d="M4.500 0v9M0 4.500h9"/>`)}</button>
            <span class="user">${ic(12, 12, svg`<circle cx="6" cy="6" r="6" fill="#8d8468"/><path d="M2 3q4-2 8 0L9 5H3z" fill="#37352c"/><circle cx="6" cy="7.500" r="2.500" fill="#c8bfa4"/><path d="M3 8h6" stroke="#4a473c"/>`)}天色迷香</span>
          </div>
          <div class="quick">
            <button class="file">${ic(12, 14, burger)}文件</button>
            <div class="icons">${q("打开", open)}${q("保存", save)}${q("输出", pdf)}${q("打印", print)}${q("预览", preview)}${q("撤销", undo)}${q("恢复", redo, "dim")}${q("更多", more)}</div>
            <nav class="pages">${tabs.map((t) => html`<button class=${t === this.active ? "sel" : ""} @click=${() => (this.active = t)}>${t}</button>`)}</nav>
            <div class="right">${q("分享", share)}${q("选项", dots)}${q("收起", up)}</div>
          </div>
          <ribbon-bar></ribbon-bar>
          <section class="work">
            <div class="stage">
              <article class="sheet">
                <div class="marks"><i></i><i></i></div>
                <div class="line">
                  <button class="anchor" aria-label="段落">${ic(14, 14, svg`<path d="M2.500 1.500h6l3.500 3.500v7.500H2.500z" fill="#b9cbe2" stroke="#8fb0da"/><path d="M8 1.500V5h4M4.500 5v5h3M4.500 7.500h5.500M4.500 10h5.500" fill="none" stroke="#7fa3d3"/>`)}${caret}</button>
                  <div class="runs"><span class="tiny">⑫</span><span class="ring">③</span><span class="tiny pickd">④</span><span class="ring">⑤</span><span class="ring">⑥</span><span class="ring">⑦</span></div>
                </div>
                <svg class="pointer" width="94" height="124" viewBox="250 204 94 124" fill="none" stroke="#f8ee10" stroke-width="2" stroke-linejoin="round"><path d="M254.500 326L328 219.500 322 218 340 208 336 228 332 223.500 290 281z"/><path d="M254.500 326L300 264" stroke-width="2.500"/></svg>
              </article>
            </div>
            <div class="scroll">${ic(8, 8, svg`<path class="s" d="M0 1h8M0 7h8M2 3h4L4 5z"/>`)}<span class="flip">${caret}</span><div class="thumb"></div>${caret}</div>
          </section>
          <status-bar></status-bar>
          <div class="mark">
            <div class="logo">Bai<span class="paw">${ic(54, 58, svg`<g class="f"><ellipse cx="7.700" cy="21" rx="6.500" ry="8.500"/><ellipse cx="20" cy="9.300" rx="6.300" ry="9"/><ellipse cx="35.700" cy="10" rx="6.500" ry="8.500"/><ellipse cx="45.700" cy="25" rx="6.500" ry="8.500"/><path d="M27 22q8 0 13 9 3 5 7 9 5 7 0 12-4 5-12 4H19q-8 1-12-4-5-6 0-12 4-4 7-9 5-9 13-9z"/></g>`)}<span class="du">du</span></span><span class="han">经验</span></div>
            <div class="site">jingyan.baidu.com</div>
          </div>
        </main>
      </div>`;
  }
}
